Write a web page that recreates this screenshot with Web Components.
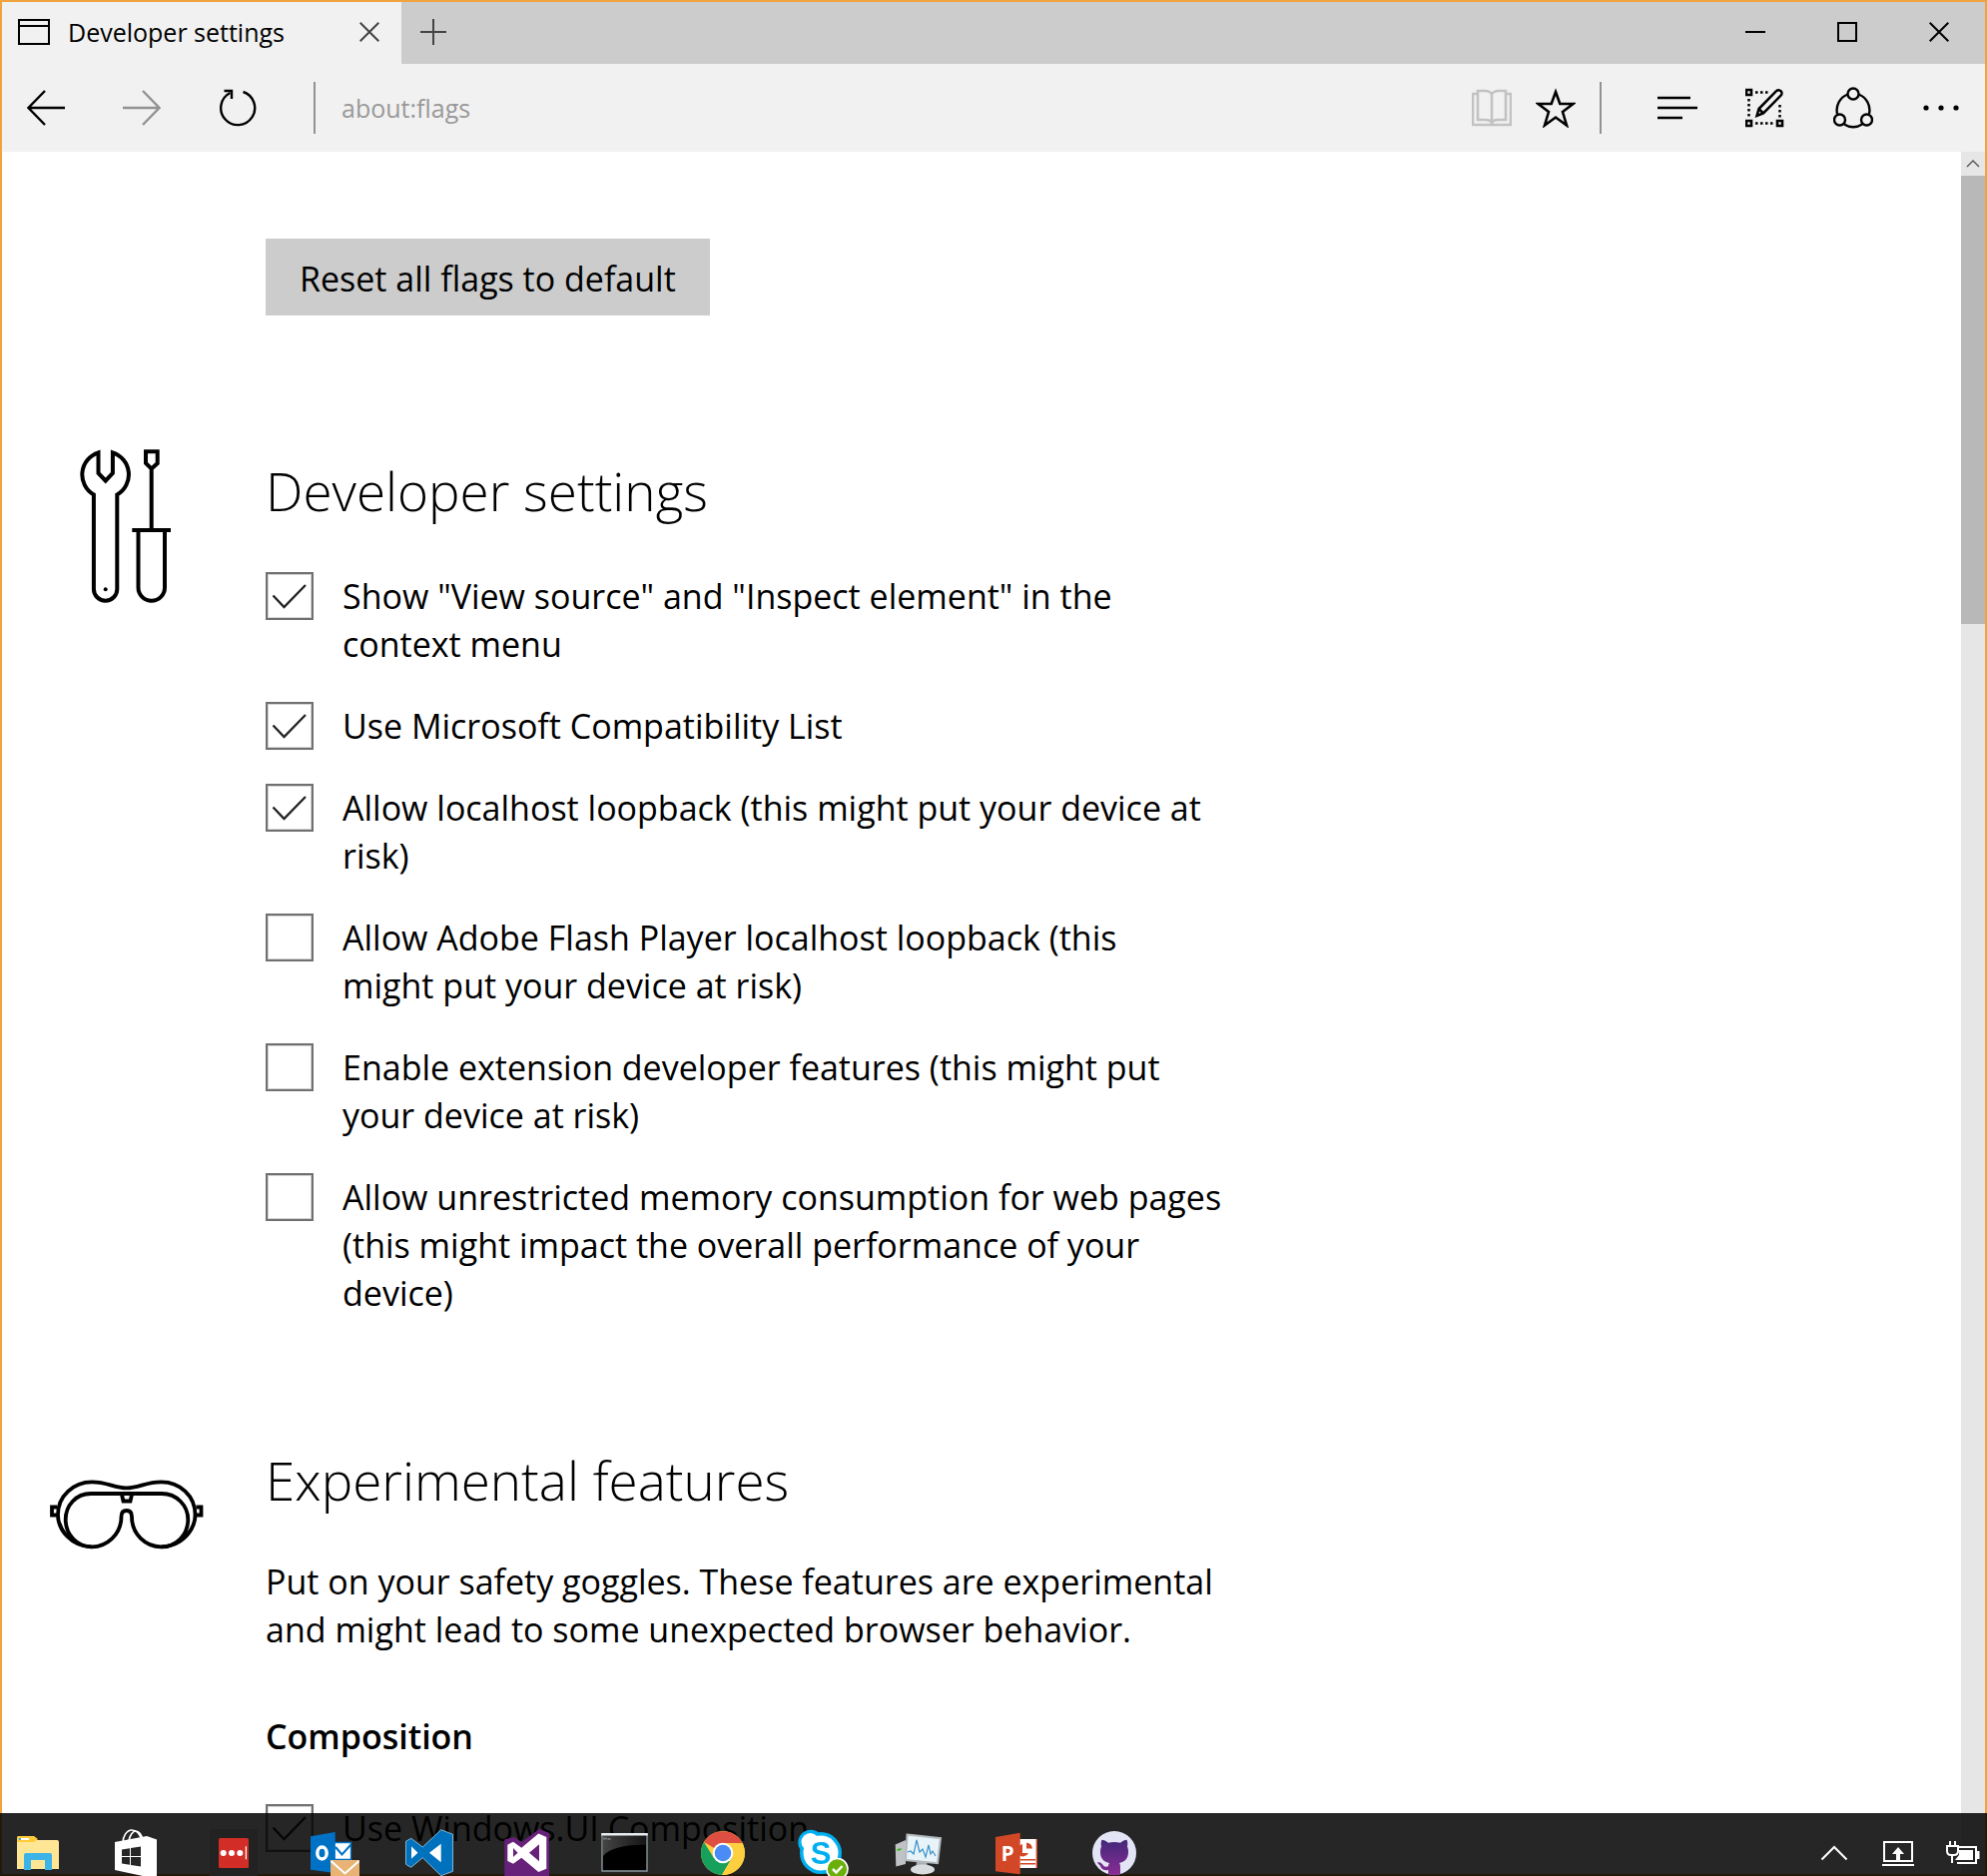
<!DOCTYPE html>
<html lang="en">
<head>
<meta charset="utf-8">
<title>Developer settings</title>
<style>
  html, body { height: 100%; margin: 0; }
  body { background: #fff; color: #000; font-family: "Open Sans", "Noto Sans", sans-serif; overflow: hidden; }
</style>
</head>
<body>
<edge-window>
  <edge-titlebar slot="chrome">Developer settings</edge-titlebar>
  <edge-toolbar slot="chrome" address="about:flags"></edge-toolbar>
  <reset-button>Reset all flags to default</reset-button>
  <flag-section icon="tools" heading="Developer settings">
    <flag-option checked>Show "View source" and "Inspect element" in the context menu</flag-option>
    <flag-option checked>Use Microsoft Compatibility List</flag-option>
    <flag-option checked>Allow localhost loopback (this might put your device at risk)</flag-option>
    <flag-option>Allow Adobe Flash Player localhost loopback (this might&nbsp;put your device at risk)</flag-option>
    <flag-option>Enable extension developer features (this might put your device at risk)</flag-option>
    <flag-option>Allow unrestricted memory consumption for web pages (this might impact the overall performance of your device)</flag-option>
  </flag-section>
  <flag-section icon="goggles" heading="Experimental features" subheading="Composition">
    <span slot="intro">Put on your safety goggles. These features are experimental and might lead to some unexpected browser behavior.</span>
    <flag-option checked>Use Windows.UI.Composition</flag-option>
  </flag-section>
</edge-window>
<task-bar></task-bar>

<script>
const svg = (w, h, body, attrs = '') =>
  `<svg width="${w}" height="${h}" viewBox="0 0 ${w} ${h}" fill="none" stroke="currentColor" stroke-width="2" aria-hidden="true" ${attrs}>${body}</svg>`;

const ICONS = {
  page: svg(32, 26, '<path d="M1 1h30v24H1zM1 7h30"/>'),
  close: svg(20, 20, '<path d="M.7.7l18.6 18.6M19.3.7L.7 19.3"/>'),
  plus: svg(26, 26, '<path d="M13 0v26M0 13h26"/>'),
  minimize: svg(20, 20, '<path d="M0 10h20"/>'),
  maximize: svg(20, 20, '<path d="M1 1h18v18H1z"/>'),
  back: svg(38, 36, '<path d="M38 18H2M18 1L1.5 18 18 35"/>', 'style="stroke-width:2.400"'),
  forward: svg(38, 36, '<path d="M0 18h36M20 1l16.500 17L20 35"/>', 'style="stroke-width:2.400"'),
  refresh: svg(38, 38, '<path d="M24.500 3A17 17 0 1 1 11.500 4"/><path d="M5.500 2H13v8"/>', 'style="stroke-width:2.400"'),
  book: svg(40, 38, '<path d="M5 5H1v31h38V5h-4"/><path d="M6 2h7c4 0 7 2 7 4 0-2 3-4 7-4h7v29h-7c-4 0-7 1.500-7 4 0-2.500-3-4-7-4H6zM20 6v29"/>', 'style="stroke-width:2.600"'),
  star: svg(40, 40, '<path d="M20 4l4.300 12H37.500L27 24l4 13.500L20 29.500 9 37.500 13 24 2.500 16h13.200z" stroke-width="2.600"/>'),
  hub: svg(40, 24, '<path d="M0 2h33M0 12h40M0 22h25" stroke-width="2.500"/>'),
  note: svg(40, 40, '<path d="M1 2h5v5H1zM1 33h5v5H1zM32 33h5v5h-5z" stroke-width="2.600"/><path d="M10 4.500h13M3.500 11v20M10 35.500h20M34.500 17v14" stroke-dasharray="2.500 2.500" stroke-width="2.500"/><path d="M11.500 28l2-7L31 3.200c3-3 7.500 1.500 4.500 4.500L18 25.500zM13.500 21l4.500 4.500" stroke-width="2.500"/>'),
  share: svg(40, 42, '<path d="M14.500 7.500A17 17 0 0 0 4 27M25.500 7.500A17 17 0 0 1 36 27M11 37.500a17 17 0 0 0 18 0"/><circle cx="20" cy="7" r="5.500"/><circle cx="6.500" cy="33" r="5.500"/><circle cx="33.500" cy="33" r="5.500"/>', 'style="stroke-width:2.400"'),
  more: svg(38, 8, '<g fill="currentColor" stroke="none"><circle cx="4" cy="4" r="2.600"/><circle cx="19" cy="4" r="2.600"/><circle cx="34" cy="4" r="2.600"/></g>'),
  scrollUp: svg(14, 8, '<path d="M1 7l6-6 6 6" stroke-width="1.400"/>'),
  check: svg(48, 48, '<path d="M7.500 23.500L18.500 35 40 13"/>', 'style="stroke-width:2.300"'),
  tools: svg(154, 154, '<path d="M48.500 3.300V24l7.200 7.500 7.200-7.500V3.300A23.200 23.200 0 0 1 67.300 45.500V140a11.700 11.700 0 0 1-23.400 0V45.500A23.200 23.200 0 0 1 48.500 3.300z"/><circle cx="55.700" cy="140.300" r="2" fill="currentColor" stroke="none"/><path d="M96 2.300h11.700V14l-6 5.500L96 14zM101.700 19.500V81M82.300 81h38.700M88.500 81v57.500a13.250 13.250 0 0 0 26.500 0V81"/>', 'style="stroke-width:4"'),
  goggles: svg(154, 75, '<path d="M41.700 69.300C22 69 8 53 8 37 8 18 24 4.300 42 4.300c16 0 22 6 34.700 6s18.800-6 34.800-6c18.500 0 34 13.700 34 32.700 0 16-14.500 32-34 32.300"/><path d="M41 16h71c15 0 26.300 12 26.300 26 0 15-11.300 27.300-26.800 27.300S82 57 82 39c0-4-1.500-6-5.300-6s-5.200 2-5.200 6c0 18-14.500 30.300-29.500 30.300S15.700 57 15.700 42c0-14 10.300-26 25.300-26z"/><path d="M72 17l1.500 6.500h7L82 17M7 29.500H2v8h5M146.500 29.500h5v8h-5"/><path d="M10 46c4 11 12 19 24 22M144 46c-4 11-12 19-24 22" stroke-width="3"/>', 'style="stroke-width:3.800"'),

  explorer: svg(48, 48, '<g stroke="none"><path d="M3 10a2 2 0 0 1 2-2h14l4 4h20a2 2 0 0 1 2 2v27H3z" fill="#ffe694"/><path d="M3 14v-4a2 2 0 0 1 2-2h15l4 3-4 3z" fill="#ffcb3a"/><path d="M7 10h8v2H7z" fill="#fff"/><path d="M5 10h2v2H5z" fill="#29b6e8"/><path d="M10 42V27a2 2 0 0 1 2-2h24a2 2 0 0 1 2 2v15h-7V32H17v10z" fill="#3cb4e7"/></g>'),
  store: svg(48, 48, '<path d="M11 15c0-7 4-13 9-13s8 4 10 10M17 13c1-6 4-10 7-10s6 4 7 9" stroke="#fff" stroke-width="1.700"/><path d="M3 14l32-6 10 3.500V48H31L3 42z" fill="#fff" stroke="none"/><path d="M10 21.500l8-1.200V28h-8zM19 20l10-1.500V28H19zM10 29h8v7.700l-8-1.200zM19 29h10v9.500L19 37z" fill="#262626" stroke="none"/>'),
  password: svg(48, 48, '<g stroke="none"><path d="M0 1h48v47H0z" fill="#222"/><rect x="9" y="10" width="30" height="30" rx="1.500" fill="#d32d27"/><g fill="#fff"><circle cx="13.700" cy="25" r="3"/><circle cx="22" cy="25" r="3"/><circle cx="30.300" cy="25" r="3"/><path d="M35.800 18.300h1.200v13h-1.200z"/></g></g>'),
  outlook: svg(54, 48, '<path d="M27 14.500h16.500v17H27z" fill="#fff" stroke="#0072c6" stroke-width="1.300"/><path d="M28 19l6.500 7.500 9-10" stroke="#0072c6"/><path d="M3 8.300L27.700 4v41L3 41.700z" fill="#0072c6" stroke="none"/><ellipse cx="14.500" cy="25" rx="4.700" ry="6" stroke="#fff" stroke-width="3.400"/><path d="M23 32h29v16H23z" fill="#e8b374" stroke="none"/><path d="M23.500 33l14 12.500L51.500 33" stroke="#fff"/>'),
  code: svg(48, 48, '<path d="M.500 13.300l5.200-3L17.300 19 35.700 1.700l11.800 4.600v37l-11.800 4.400-18.400-18-11.600 9.600-5.200-3z" fill="#0071bc" stroke="#9fd0ee" stroke-width=".8"/><path d="M6 18.300v12.400l6.500-6zM35.700 15.700v18.500L24 24.700z" fill="#fff" stroke="none"/>'),
  studio: svg(48, 48, '<g stroke="none"><path d="M1.300 11.500L11 9l7.500 5L36 1l10 4v43H1.300z" fill="#68217a"/><path fill-rule="evenodd" d="M35.300 5.500l8 3.500v31.700l-8 3.300-17-14.300-8.300 6L4.300 33V16.700l5.700-3 8.300 6zM10 20v9l4.500-4.300zM36 16.300v16.900l-10-8.500z" fill="#fff"/></g>'),
  terminal: svg(48, 48, '<defs><linearGradient id="g" x1="0" x2="1"><stop stop-color="#444"/><stop offset="1" stop-color="#151515"/></linearGradient></defs><path d="M1 6h45v37H1z" fill="#000" stroke="#8b969c" stroke-width="1.400"/><path d="M2 7h43v10C26 16 9 20 2 28z" fill="url(#g)" stroke="none"/><path d="M.300 6.300h46.400" stroke="#e8eef0" stroke-width="2.400"/><path d="M3 9.500v2M5 9.500v2M6.500 11h3" stroke="#aaa" stroke-width="1"/>'),
  chrome: svg(48, 48, '<g stroke="none"><circle cx="24" cy="25" r="22" fill="#fecf3e"/><path d="M24 25L5 14A22 22 0 0 1 43.500 15H24z" fill="#df4f41"/><path d="M5 14a22 22 0 0 0 18 33l10-17-9-5-9 5z" fill="#17a05c"/><path d="M24 15h19.500A22 22 0 0 1 23 47l10-17z" fill="#fecf3e"/><circle cx="24" cy="25" r="10.300" fill="#fff"/><circle cx="24" cy="25" r="8.300" fill="#4b8bf5"/></g>'),
  skype: svg(54, 48, '<g stroke="none"><circle cx="14" cy="14.500" r="12.700" fill="#00aff0"/><circle cx="33" cy="34" r="12" fill="#00aff0"/><circle cx="24" cy="25" r="21" fill="#00aff0"/><circle cx="13.500" cy="14" r="9" fill="#fff"/><circle cx="24" cy="25" r="17.500" fill="#fff"/></g><text x="24" y="36" text-anchor="middle" font-family="Liberation Sans" font-weight="700" font-size="31" fill="#00aff0" stroke="none">S</text><circle cx="40.500" cy="41" r="10.500" fill="#6bb00a" stroke="#fff" stroke-width="1.600"/><path d="M36 41l3.500 3.500 6-6.500" stroke="#fff" stroke-width="2.500"/>'),
  monitor: svg(48, 48, '<path d="M.700 16.500L11 12v24L1.300 38.500z" fill="#bfc3c6" stroke="none"/><path d="M2.500 21l4-1v2l-4 1z" fill="#3fb618" stroke="none"/><path d="M22 34h10l1 6H21z" fill="#aab0b4" stroke="none"/><ellipse cx="28" cy="41.500" rx="12" ry="5" fill="#d9dcde" stroke="none"/><path d="M12.500 6.500l33.500 3.700-3 25-32-3.200z" fill="#e8f4fa" stroke="#b3b9bd" stroke-width="2"/><path d="M13 24l3-1 3 3 3-14 3 12 3-3 3 8 3-12 2 9 2-3 3 5" stroke="#3c93c8" stroke-width="1.200"/>'),
  slides: svg(48, 48, '<g stroke="none"><path d="M27 11h18v29H27z" fill="#fff"/><path d="M28 17a6 6 0 1 0 8 8h-6v-9zM34 14.500a7 7 0 0 1 6 6h-6z" fill="#d24726"/><path d="M28 31h15v1.500H28zM28 35h15v1.500H28z" fill="#d24726"/><path d="M3 9l24.700-4.300v41.600L3 43.300z" fill="#d24726"/></g><path d="M44.300 11v29" stroke="#d24726" stroke-width="1.400"/><text x="15" y="33" text-anchor="middle" font-family="Open Sans" font-weight="700" font-size="21" fill="#fff" stroke="none">P</text>'),
  github: svg(48, 48, '<defs><linearGradient id="h" x2="0" y2="1"><stop stop-color="#43297a"/><stop offset="1" stop-color="#8a2c94"/></linearGradient></defs><circle cx="24" cy="25" r="22" fill="#e3e5f6" stroke="none"/><path d="M11.500 11.700c2 0 4 1 6.500 3a26 26 0 0 1 12 0c2.500-2 4.500-3 6.500-3 1 2.500 1 4.500.500 6.800C38 21 38 22.500 38 24c0 7-4 10-9 11 1 1.500 1 3 1 4v7.300a22 22 0 0 1-12 0V42c-6 1-7-2-8-4-1-1.500-2-2-3-3.500 3-1 4.500 1 6 3 1.500 1.500 3 1.500 5 .800 0-1.500.500-2.500 1-3.300-5-1-9-4-9-11 0-1.500 0-3 1-5.500-.500-2.300-.500-4.300.500-6.800z" fill="url(#h)" stroke="none"/>'),
  chevron: svg(28, 16, '<path d="M1.500 14.500L14 2l12.500 12.500"/>'),
  project: svg(32, 26, '<path d="M2 2h28v19H2z"/><path d="M0 25h32"/><path d="M16 7l6 7h-4v6h-4v-6h-4z" fill="currentColor" stroke="none"/>'),
  battery: svg(34, 24, '<path d="M13 6h17v16H11M31 14h2" stroke-width="2"/><path d="M13 9h14v10H9l4-5z" fill="currentColor" stroke="none"/><path d="M4 0v5M9 0v5" /><path d="M1 5h11v5c0 3-2 4-4 4H5c-2 0-4-1-4-4zM6 14v8" /><path d="M32 10v8" stroke-width="3"/>')
};

class ShadowElement extends HTMLElement {
  connectedCallback() {
    if (this.shadowRoot) return;
    const template = document.createElement('template');
    template.innerHTML = `<style>
      *, *::before { box-sizing: border-box; }
      svg { display: block; flex: none; }
      button { border: 0; padding: 0; margin: 0; background: none; color: inherit; font: inherit;
               display: flex; align-items: center; justify-content: center; flex: none; }
      ${this.styles()}</style>${this.markup()}`;
    this.attachShadow({ mode: 'open' }).append(template.content.cloneNode(true));
  }
}

customElements.define('edge-window', class extends ShadowElement {
  styles() { return `
    :host { display: flex; flex-direction: column; box-sizing: border-box; height: 100vh; border: 2px solid #f0a33f; }
    .view { display: flex; flex: 1; min-height: 0; }
    main { flex: 1; min-width: 0; overflow: hidden; padding: 87px 48px 0; }`; }
  markup() { return `<slot name="chrome"></slot>
    <div class="view"><main><slot></slot></main><scroll-rail></scroll-rail></div>`; }
});

customElements.define('edge-titlebar', class extends ShadowElement {
  styles() { return `
    :host { display: flex; flex: none; height: 62px; background: #ccc; font-size: 25px; line-height: 34px; }
    .tab { display: flex; align-items: center; width: 400px; padding: 0 22px 2px 16px; gap: 18px; background: #f1f1f1; }
    .title { flex: 1; white-space: nowrap; }
    .small { color: #444; }
    .new { width: 64px; padding-bottom: 2px; }
    .spacer { flex: 1; }
    .caption { width: 92px; padding-bottom: 2px; }`; }
  markup() { return `<div class="tab">${ICONS.page}<span class="title"><slot></slot></span>
    <button class="small" aria-label="Close tab">${ICONS.close}</button></div>
    <button class="new small" aria-label="New tab">${ICONS.plus}</button>
    <div class="spacer"></div>
    <button class="caption" aria-label="Minimize">${ICONS.minimize}</button>
    <button class="caption" aria-label="Maximize">${ICONS.maximize}</button>
    <button class="caption" aria-label="Close">${ICONS.close}</button>`; }
});

customElements.define('edge-toolbar', class extends ShadowElement {
  styles() { return `
    :host { display: flex; flex: none; align-items: center; height: 88px; background: #f1f1f1; }
    button { width: 88px; height: 88px; }
    nav { display: flex; gap: 8px; }
    .rule { width: 2px; height: 52px; background: #929292; }
    nav + .rule { margin-left: 32px; }
    input { flex: 1; min-width: 0; margin: 0; padding: 0 0 0 26px; border: 0; background: none; outline: 0;
            color: #999; font: 25px/34px "Open Sans", sans-serif; }
    .off { color: #929292; }
    .mini { width: 64px; }
    .faint { color: #c2c2c2; }
    .mini + .rule { margin: 0 32px 0 12px; }`; }
  markup() { return `<nav>
      <button aria-label="Back">${ICONS.back}</button>
      <button class="off" aria-label="Forward">${ICONS.forward}</button>
      <button aria-label="Refresh">${ICONS.refresh}</button></nav>
    <div class="rule"></div>
    <input type="text" aria-label="Address" value="${this.getAttribute('address')}">
    <button class="mini faint" aria-label="Reading view">${ICONS.book}</button>
    <button class="mini" aria-label="Add to favorites">${ICONS.star}</button>
    <div class="rule"></div>
    <button aria-label="Hub">${ICONS.hub}</button>
    <button aria-label="Make a web note">${ICONS.note}</button>
    <button aria-label="Share">${ICONS.share}</button>
    <button aria-label="More">${ICONS.more}</button>`; }
});

customElements.define('scroll-rail', class extends ShadowElement {
  styles() { return `
    :host { display: flex; flex-direction: column; flex: none; width: 24px; background: #e6e6e6; }
    button { height: 24px; color: #555; }
    .thumb { height: 26%; background: #b8b8b8; }`; }
  markup() { return `<button aria-label="Scroll up">${ICONS.scrollUp}</button><div class="thumb"></div>`; }
});

customElements.define('reset-button', class extends ShadowElement {
  styles() { return `
    :host { display: flex; margin-left: 216px; margin-bottom: 134px; }
    button { padding: 16px 34px 13px; background: #ccc; font-size: 34px; line-height: 48px; }`; }
  markup() { return `<button><slot></slot></button>`; }
});

customElements.define('flag-section', class extends ShadowElement {
  styles() { return `
    :host { display: flex; gap: 62px; margin-bottom: 122px; font-size: 34px; line-height: 48px; }
    .icon { width: 154px; flex: none; }
    :host([icon="goggles"]) .icon { padding-top: 39px; }
    .body { flex: 0 1 960px; min-width: 0; padding-top: 4px; }
    h2 { margin: 0 0 43px; font-size: 53px; line-height: 76px; font-weight: 300; }
    .intro { display: block; margin: -4px 0 59px; }
    h3 { margin: 0 0 44px; font-size: 34px; line-height: 48px; font-weight: 600; }
    .flags { display: flex; flex-direction: column; gap: 34px; }`; }
  markup() {
    const sub = this.getAttribute('subheading');
    return `<div class="icon">${ICONS[this.getAttribute('icon')]}</div>
      <div class="body"><h2>${this.getAttribute('heading')}</h2>
      ${sub ? `<div class="intro"><slot name="intro"></slot></div><h3>${sub}</h3>` : ''}
      <div class="flags"><slot></slot></div></div>`; }
});

customElements.define('flag-option', class extends ShadowElement {
  styles() { return `
    :host { display: block; }
    label { display: flex; gap: 29px; align-items: flex-start; }
    .box { display: grid; flex: none; width: 48px; height: 48px; }
    .box > * { grid-area: 1 / 1; }
    input { appearance: none; margin: 0; width: 48px; height: 48px; border: 2px solid #707070; box-shadow: inset 0 0 0 1px #d4d4d4; }
    svg { visibility: hidden; color: #222; pointer-events: none; }
    input:checked + svg { visibility: visible; }`; }
  markup() { return `<label><span class="box"><input type="checkbox" ${this.hasAttribute('checked') ? 'checked' : ''}>${ICONS.check}</span>
    <span><slot></slot></span></label>`; }
});

customElements.define('task-bar', class extends ShadowElement {
  styles() { return `
    :host { position: fixed; left: 0; right: 0; bottom: 0; height: 63px; overflow: hidden; display: flex;
            justify-content: space-between; box-sizing: border-box; padding: 15px 7px 0 14px;
            background: rgba(0, 0, 0, .85); color: #fff; }
    .apps { display: flex; gap: 50px; }
    .apps button { width: 48px; height: 48px; justify-content: flex-start; }
    .tray { display: flex; }
    .tray button { width: 64px; height: 50px; }
    .tray button:last-child { width: 50px; justify-content: flex-end; }`; }
  markup() {
    const apps = { explorer: 'File Explorer', store: 'Store', password: 'Password manager', outlook: 'Outlook', code: 'Visual Studio Code',
      studio: 'Visual Studio', terminal: 'Command Prompt', chrome: 'Chrome', skype: 'Skype', monitor: 'Performance Monitor',
      slides: 'PowerPoint', github: 'GitHub' };
    const tray = { chevron: 'Show hidden icons', project: 'Project', battery: 'Battery' };
    const list = set => Object.entries(set).map(([k, label]) => `<button aria-label="${label}">${ICONS[k]}</button>`).join('');
    return `<div class="apps">${list(apps)}</div><div class="tray">${list(tray)}</div>`; }
});
</script>
</body>
</html>
